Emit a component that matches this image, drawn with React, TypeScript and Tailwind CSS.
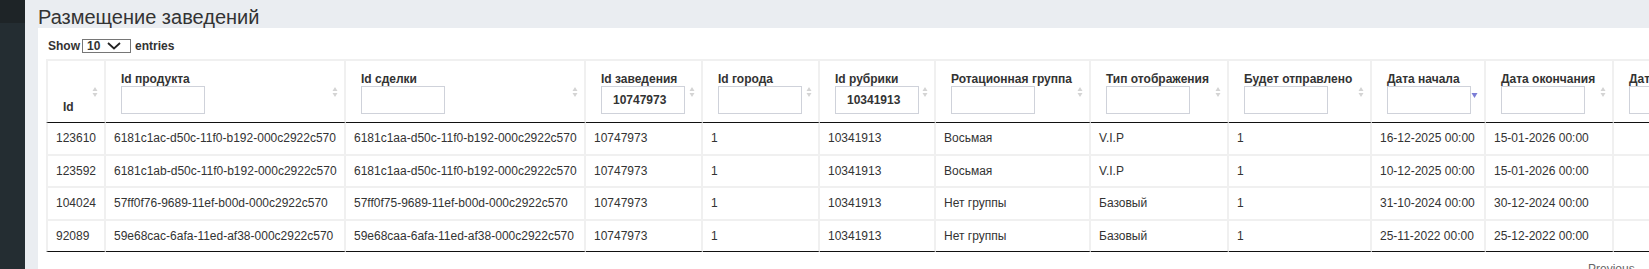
import React from "react";

type Col = { label: string; width: number; filter?: string; hasInput: boolean; sort: "both" | "desc" };

const columns: Col[] = [
  { label: "Id", width: 60, hasInput: false, sort: "both" },
  { label: "Id продукта", width: 240, hasInput: true, sort: "both" },
  { label: "Id сделки", width: 240, hasInput: true, sort: "both" },
  { label: "Id заведения", width: 117, hasInput: true, filter: "10747973", sort: "both" },
  { label: "Id города", width: 117, hasInput: true, sort: "both" },
  { label: "Id рубрики", width: 116, hasInput: true, filter: "10341913", sort: "both" },
  { label: "Ротационная группа", width: 155, hasInput: true, sort: "both" },
  { label: "Тип отображения", width: 138, hasInput: true, sort: "both" },
  { label: "Будет отправлено", width: 143, hasInput: true, sort: "both" },
  { label: "Дата начала", width: 114, hasInput: true, sort: "desc" },
  { label: "Дата окончания", width: 128, hasInput: true, sort: "both" },
  { label: "Дата создания", width: 140, hasInput: true, sort: "both" },
];

const rows: string[][] = [
  ["123610", "6181c1ac-d50c-11f0-b192-000c2922c570", "6181c1aa-d50c-11f0-b192-000c2922c570", "10747973", "1", "10341913", "Восьмая", "V.I.P", "1", "16-12-2025 00:00", "15-01-2026 00:00", ""],
  ["123592", "6181c1ab-d50c-11f0-b192-000c2922c570", "6181c1aa-d50c-11f0-b192-000c2922c570", "10747973", "1", "10341913", "Восьмая", "V.I.P", "1", "10-12-2025 00:00", "15-01-2026 00:00", ""],
  ["104024", "57ff0f76-9689-11ef-b00d-000c2922c570", "57ff0f75-9689-11ef-b00d-000c2922c570", "10747973", "1", "10341913", "Нет группы", "Базовый", "1", "31-10-2024 00:00", "30-12-2024 00:00", ""],
  ["92089", "59e68cac-6afa-11ed-af38-000c2922c570", "59e68caa-6afa-11ed-af38-000c2922c570", "10747973", "1", "10341913", "Нет группы", "Базовый", "1", "25-11-2022 00:00", "25-12-2022 00:00", ""],
];

function SortIcon({ kind }: { kind: "both" | "desc" }) {
  if (kind === "desc") {
    return (
      <svg width="7" height="12" viewBox="0 0 7 12" className="absolute right-[6px] top-1/2 -translate-y-1/2 mt-[2px]">
        <polygon points="0.5,5 6.5,5 3.5,10" fill="#7b7dd6" />
      </svg>
    );
  }
  return (
    <svg width="6" height="12" viewBox="0 0 6 12" className="absolute right-[6px] top-1/2 -translate-y-1/2">
      <polygon points="0.5,5 5.5,5 3,1" fill="#d4d4d4" />
      <polygon points="0.5,7 5.5,7 3,11" fill="#d4d4d4" />
    </svg>
  );
}

export default function App() {
  const tableWidth = columns.reduce((s, c) => s + c.width, 0);

  return (
    <div className="flex h-[269px] w-[1649px] overflow-hidden font-['Liberation_Sans',Arial,sans-serif] text-[#333]">
      <div className="flex w-[25px] shrink-0 flex-col">
        <div className="h-[23px] bg-[#1e2427]"></div>
        <div className="flex-1 bg-[#242d32]"></div>
      </div>
      <div className="flex min-w-0 flex-1 flex-col bg-[#eaedf1] pl-[13px]">
        <div className="h-[28px] pt-[5px] text-[20px] leading-[24px] text-[#333]">Размещение заведений</div>
        <div className="h-[2px] bg-[#4891bf]"></div>
        <div className="flex-1 bg-white pl-[8px]">
          <div className="mt-[11px] mb-[7px] flex h-[13px] items-center pl-[2px] text-[12px] font-bold">
            <span>Show</span>
            <div className="ml-[2px] flex h-[14px] w-[49px] items-center border border-[#767676] pl-[4px] pr-[9px]">
              <span className="flex-1">10</span>
              <svg width="14" height="8" viewBox="0 0 14 8">
                <polyline points="1,1 7,6.5 13,1" fill="none" stroke="#222" strokeWidth="1.8" />
              </svg>
            </div>
            <span className="ml-[4px]">entries</span>
          </div>
          <table
            className="table-fixed border-separate border-spacing-0 text-[12px]"
            style={{ width: tableWidth }}
          >
            <thead>
              <tr>
                {columns.map((c, i) => (
                  <th
                    key={c.label}
                    style={{ width: c.width }}
                    className={`relative border-t-2 border-r-2 border-b border-[#f0f0f0] border-b-[#111] pt-[11px] pr-[20px] pb-[8px] pl-[15px] text-left align-bottom font-bold whitespace-nowrap ${
                      i === 0 ? "border-l-2" : ""
                    }`}
                  >
                    <div className="leading-[14px]">{c.label}</div>
                    {c.hasInput && (
                      <div className="flex h-[28px] w-[84px] items-center border border-[#cfd2da] pl-[11px] font-bold leading-[14px]">
                        {c.filter}
                      </div>
                    )}
                    <SortIcon kind={c.sort} />
                  </th>
                ))}
              </tr>
            </thead>
            <tbody>
              {rows.map((r, ri) => (
                <tr key={ri}>
                  {r.map((v, ci) => (
                    <td
                      key={ci}
                      className={`border-r-2 border-[#f0f0f0] px-2 py-2 leading-[14.5px] whitespace-nowrap ${
                        ci === 0 ? "border-l-2" : ""
                      } ${ri === rows.length - 1 ? "border-b border-b-[#111]" : "border-b-2"}`}
                    >
                      {v}
                    </td>
                  ))}
                </tr>
              ))}
            </tbody>
          </table>
          <div className="mt-[10px] ml-[1542px] text-[12px] leading-[14px] text-[#666]">Previous</div>
        </div>
      </div>
    </div>
  );
}
